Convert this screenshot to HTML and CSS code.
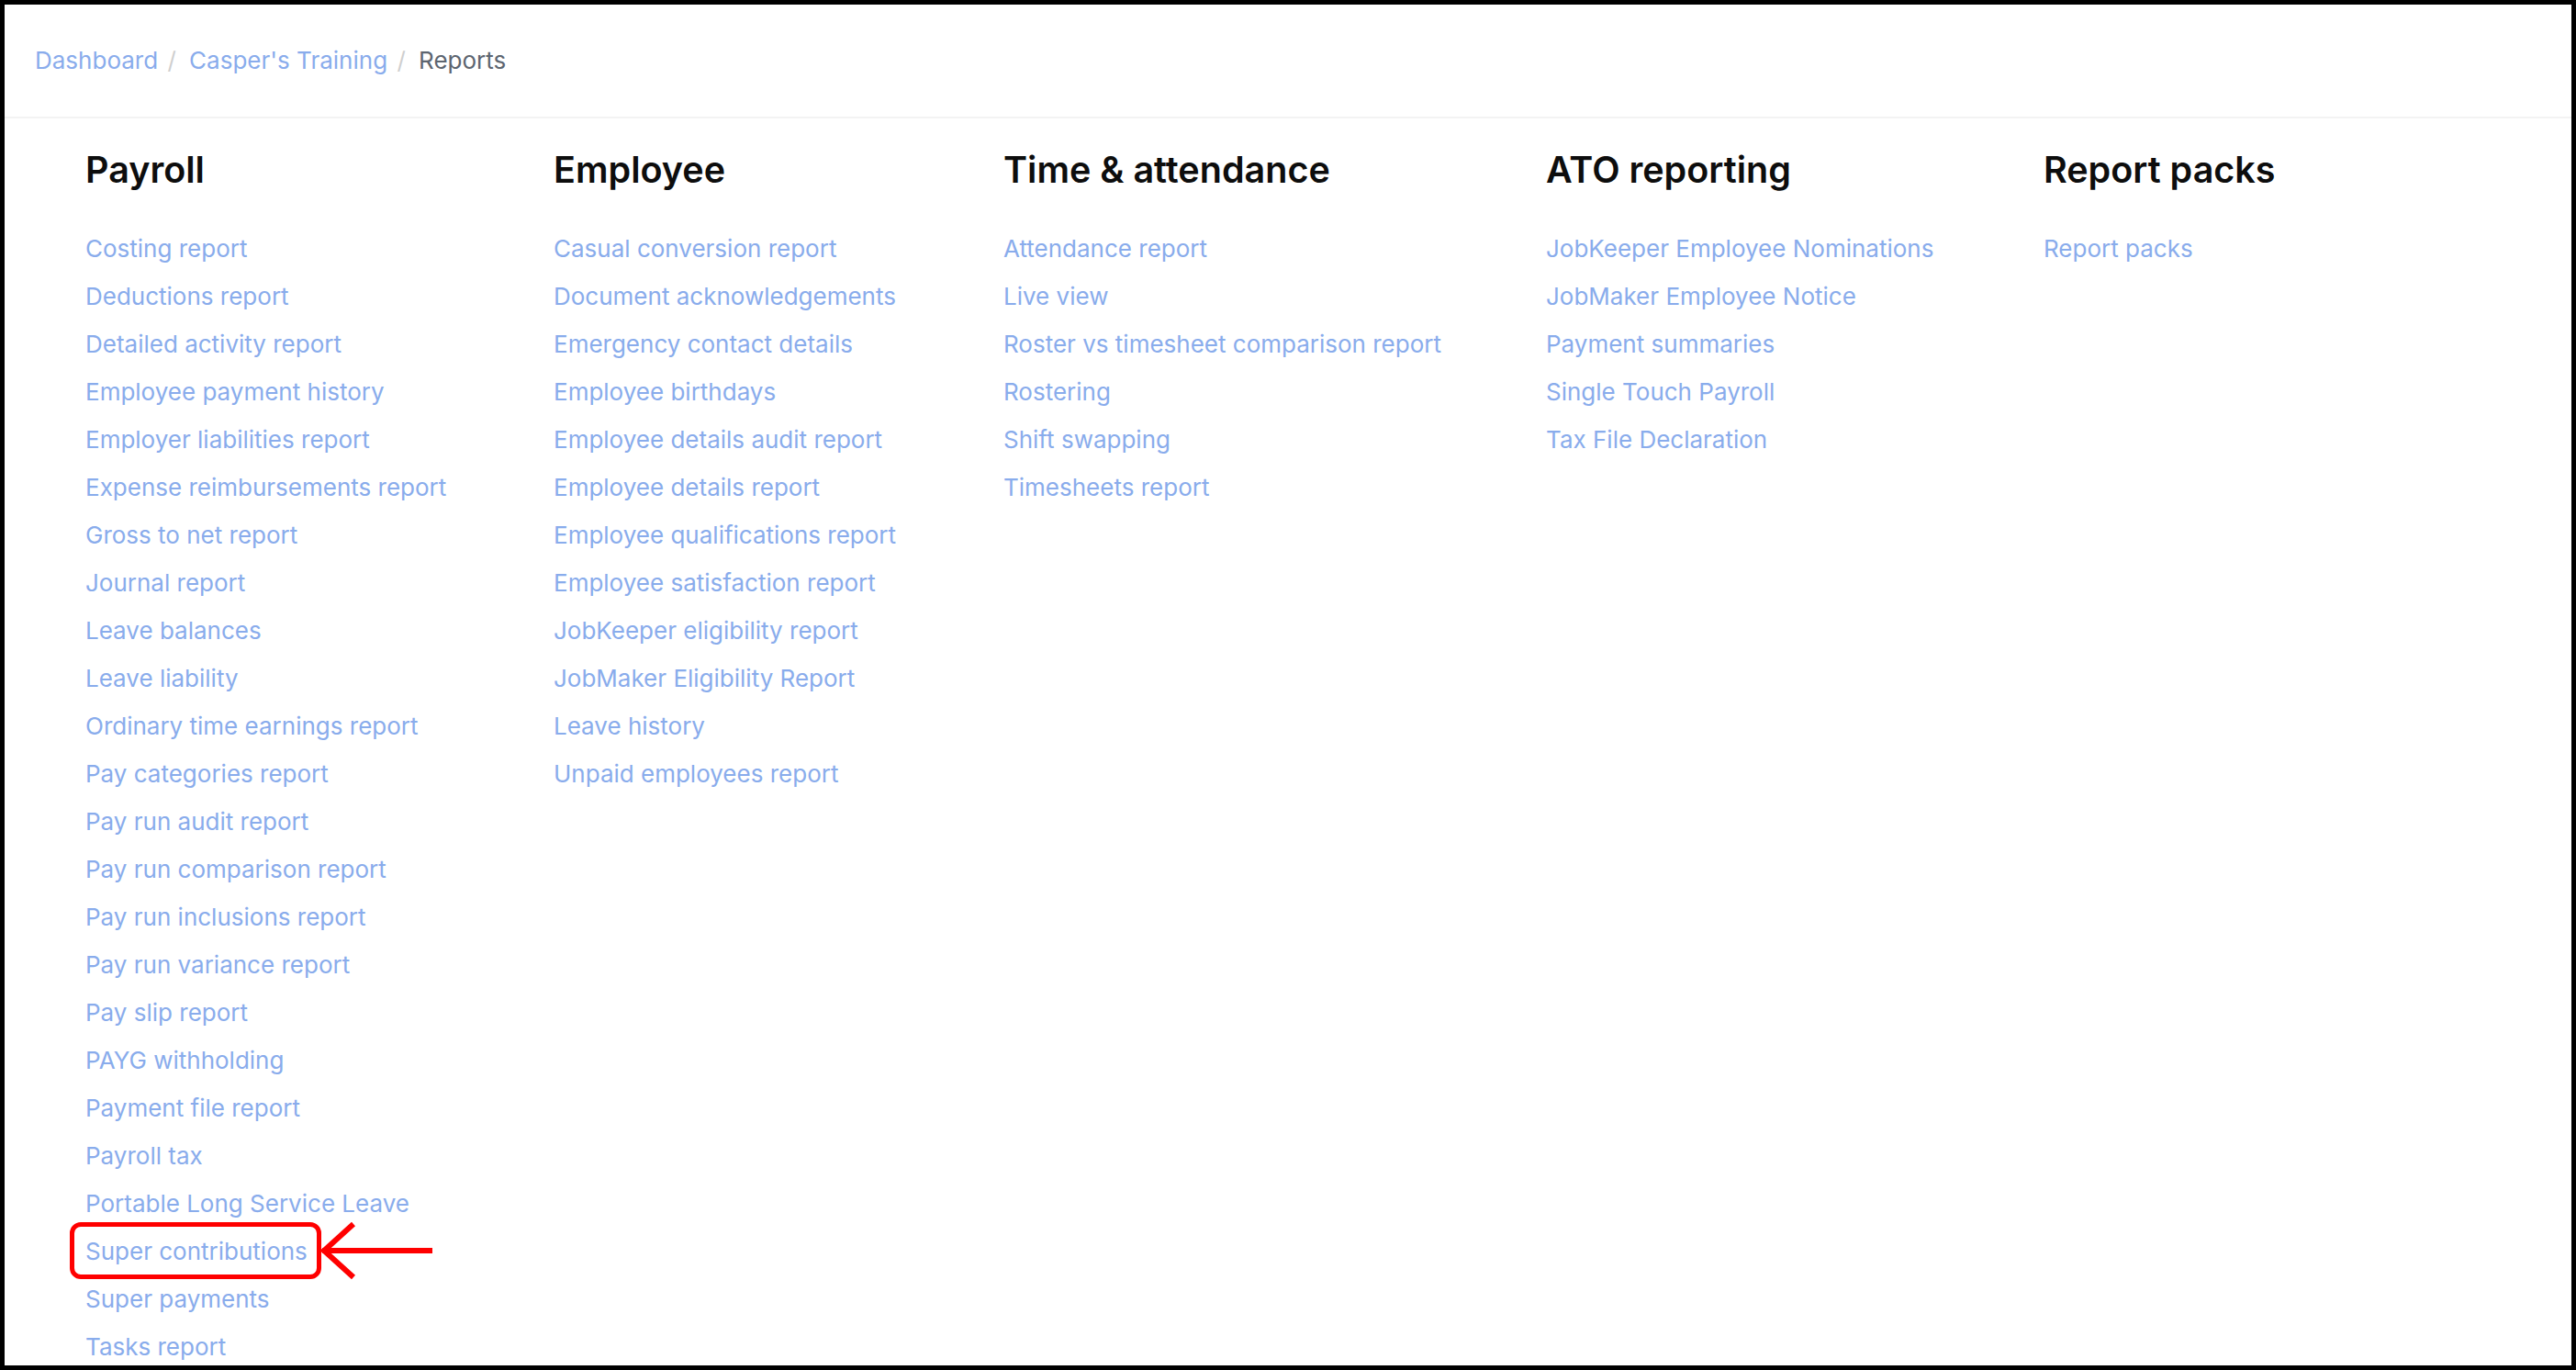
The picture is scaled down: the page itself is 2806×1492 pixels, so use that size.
FILE: index.html
```html
<!DOCTYPE html>
<html lang="en">
<head>
    <meta charset="UTF-8">
    <meta name="viewport" content="width=device-width, initial-scale=1.0">
    <title>Reports</title>
<link rel="stylesheet" href="styles.css">
</head>
<body>

    <div class="frame">
      <nav class="breadcrumb">
        <a href="#">Dashboard</a>
        <span class="sep">/</span>
        <a href="#">Casper's Training</a>
        <span class="sep">/</span>
        <span class="current">Reports</span>
      </nav>

      <div class="reports">
        <div class="group">
          <h2>Payroll</h2>
          <ul>
            <li><a href="#">Costing report</a></li>
            <li><a href="#">Deductions report</a></li>
            <li><a href="#">Detailed activity report</a></li>
            <li><a href="#">Employee payment history</a></li>
            <li><a href="#">Employer liabilities report</a></li>
            <li><a href="#">Expense reimbursements report</a></li>
            <li><a href="#">Gross to net report</a></li>
            <li><a href="#">Journal report</a></li>
            <li><a href="#">Leave balances</a></li>
            <li><a href="#">Leave liability</a></li>
            <li><a href="#">Ordinary time earnings report</a></li>
            <li><a href="#">Pay categories report</a></li>
            <li><a href="#">Pay run audit report</a></li>
            <li><a href="#">Pay run comparison report</a></li>
            <li><a href="#">Pay run inclusions report</a></li>
            <li><a href="#">Pay run variance report</a></li>
            <li><a href="#">Pay slip report</a></li>
            <li><a href="#">PAYG withholding</a></li>
            <li><a href="#">Payment file report</a></li>
            <li><a href="#">Payroll tax</a></li>
            <li><a href="#">Portable Long Service Leave</a></li>
            <li>
              <a href="#" class="marked">Super contributions
                <svg class="arrow" width="124" height="66" viewBox="0 0 124 66">
                  <path d="M4 33 H124 M38 4 L6 33 L38 62" fill="none" stroke="#f00" stroke-width="6"/>
                </svg>
              </a>
            </li>
            <li><a href="#">Super payments</a></li>
            <li><a href="#">Tasks report</a></li>
          </ul>
        </div>

        <div class="group">
          <h2>Employee</h2>
          <ul>
            <li><a href="#">Casual conversion report</a></li>
            <li><a href="#">Document acknowledgements</a></li>
            <li><a href="#">Emergency contact details</a></li>
            <li><a href="#">Employee birthdays</a></li>
            <li><a href="#">Employee details audit report</a></li>
            <li><a href="#">Employee details report</a></li>
            <li><a href="#">Employee qualifications report</a></li>
            <li><a href="#">Employee satisfaction report</a></li>
            <li><a href="#">JobKeeper eligibility report</a></li>
            <li><a href="#">JobMaker Eligibility Report</a></li>
            <li><a href="#">Leave history</a></li>
            <li><a href="#">Unpaid employees report</a></li>
          </ul>
        </div>

        <div class="group">
          <h2>Time &amp; attendance</h2>
          <ul>
            <li><a href="#">Attendance report</a></li>
            <li><a href="#">Live view</a></li>
            <li><a href="#">Roster vs timesheet comparison report</a></li>
            <li><a href="#">Rostering</a></li>
            <li><a href="#">Shift swapping</a></li>
            <li><a href="#">Timesheets report</a></li>
          </ul>
        </div>

        <div class="group">
          <h2>ATO reporting</h2>
          <ul>
            <li><a href="#">JobKeeper Employee Nominations</a></li>
            <li><a href="#">JobMaker Employee Notice</a></li>
            <li><a href="#">Payment summaries</a></li>
            <li><a href="#">Single Touch Payroll</a></li>
            <li><a href="#">Tax File Declaration</a></li>
          </ul>
        </div>

        <div class="group">
          <h2>Report packs</h2>
          <ul>
            <li><a href="#">Report packs</a></li>
          </ul>
        </div>
      </div>
    </div>

</body>
</html>
```

FILE: styles.css
```css
html {
  font-family: Inter, "Noto Sans", sans-serif;
}

body {
  margin: 0;
  background-color: #000;
}

a {
  color: #89acec;
  text-decoration: none;
}

.frame {
  box-sizing: border-box;
  height: 1492px;
  border: 5px solid #000;
  background-color: #fff;
  overflow: hidden;
}

.breadcrumb {
  padding: 41px 0 41px 33px;
  font-size: 26px;
  line-height: 40px;
  border-bottom: 2px solid #f3f3f3;
}

.breadcrumb .sep {
  color: #cfcfcf;
  margin: 0 7px 0 3px;
}

.breadcrumb .current {
  color: #5d6570;
}

.reports {
  display: grid;
  grid-template-columns: 510px 490px 591px 542px auto;
  padding: 34px 0 0 88px;
}

.group h2 {
  margin: 0 0 38px 0;
  font-size: 39.5px;
  line-height: 44px;
  font-weight: 600;
  color: #0d0d0d;
}

.group ul {
  list-style: none;
  margin: 0;
  padding: 0;
}

.group li {
  font-size: 26px;
  line-height: 52px;
}

.marked {
  position: relative;
  display: inline-block;
}

.marked::before {
  content: "";
  position: absolute;
  top: -6px;
  bottom: -4px;
  left: -17px;
  right: -15px;
  border: 5px solid #f00;
  border-radius: 12px;
}

.arrow {
  position: absolute;
  left: calc(100% + 12px);
  top: -8px;
}
```
